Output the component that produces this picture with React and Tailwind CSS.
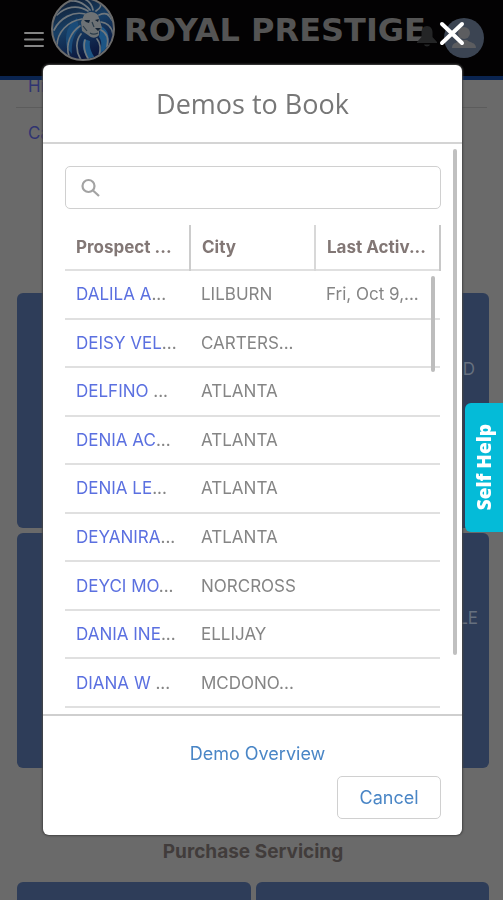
import React, { useState } from "react";

const prospects = [
  { name: "DALILA A", city: "LILBURN", date: "Fri, Oct 9,..." },
  { name: "DEISY VEL", city: "CARTERS..." },
  { name: "DELFINO ", city: "ATLANTA" },
  { name: "DENIA AC", city: "ATLANTA" },
  { name: "DENIA LE", city: "ATLANTA" },
  { name: "DEYANIRA", city: "ATLANTA" },
  { name: "DEYCI MO", city: "NORCROSS" },
  { name: "DANIA INE", city: "ELLIJAY" },
  { name: "DIANA W ", city: "MCDONO..." },
];

const LionLogo = () => (
  <svg viewBox="0 0 66 66" className="h-[66px] w-[66px] shrink-0" aria-hidden="true">
    <defs>
      <linearGradient id="mane" x1="0.2" y1="0" x2="0.6" y2="1">
        <stop offset="0" stopColor="#101c30" />
        <stop offset="0.45" stopColor="#173f66" />
        <stop offset="1" stopColor="#0a1238" />
      </linearGradient>
      <clipPath id="disc">
        <circle cx="33" cy="33" r="30" />
      </clipPath>
    </defs>
    <circle cx="33" cy="33" r="31" fill="url(#mane)" stroke="#6b6b6b" strokeWidth="2" />
    <g clipPath="url(#disc)">
      <path d="M27 22 C18 28 14 38 17 52 L22 58 C21 47 24 38 29 33 Z" fill="#1a4b78" />
      <path d="M51 30 C59 34 61 43 56 54 L49 58 C52 51 52 45 49 41 Z" fill="#1c5585" />
      <path d="M34 43 C31 50 34 57 38 63 L45 62 C41 56 39 51 40 45 Z" fill="#1c5585" />
      <g fill="none" stroke="#6f777d" strokeWidth="1.700" strokeLinecap="round">
        <path d="M38 15 C27 8 15 11 7 19" />
        <path d="M35 18 C23 15 10 22 4 34" />
        <path d="M32 23 C18 25 7 36 7 50" />
        <path d="M30 30 C21 36 15 48 19 60" />
        <path d="M31 38 C26 44 25 54 31 64" />
        <path d="M35 44 C33 51 35 58 39 64" />
        <path d="M40 14 C33 6 24 3 18 6" />
        <path d="M43 14 C42 8 38 4 32 2" />
        <path d="M46 15 C51 12 52 9 49 5" />
        <path d="M49 19 C56 16 59 18 62 24" />
        <path d="M51 26 C59 27 62 33 63 38" />
        <path d="M51 34 C57 37 59 43 57 51" />
        <path d="M47 43 C51 48 51 53 49 60" />
      </g>
      <path d="M34 19 C38 15 44 15 48 19 L50 25 L52 32 L49 35 L49 39 C46 43 41 42 38 39 L32 35 L31 26 Z" fill="#6d7275" />
      <path d="M34 24 L40 24 L39 27 L36 26 Z M45 24 L49 23 L48 26 Z M45 32 L51 32 L48 35 Z" fill="#142334" />
      <path d="M40 37 C43 39 46 38 48 37 M42 26 L44 31 M33 30 L37 35" fill="none" stroke="#2b3c4a" strokeWidth="1.200" />
    </g>
  </svg>
);

const Header = () => (
  <header className="relative flex h-20 border-b-4 border-[#0a2450] bg-[#030203] pl-6">
    <button type="button" aria-label="Menu" className="mt-7 mr-1.5 h-6 w-5 self-start">
      <svg viewBox="0 0 20 24" className="h-6 w-5" stroke="#858585" strokeWidth="2" strokeLinecap="round">
        <path d="M1 5H19M1 11.5H19M1 18H19" />
      </svg>
    </button>
    <div className="-mt-1">
      <LionLogo />
    </div>
    <p className="mt-2.5 ml-2 font-['DejaVu_Sans',sans-serif] text-[32px] leading-10 font-bold whitespace-nowrap text-[#545454]">
      ROYAL PRESTIGE
    </p>
    <div className="absolute top-4 right-[18px] flex gap-1">
      <svg viewBox="0 0 24 24" className="mt-2 h-6 w-6" fill="#242526">
        <path d="M12 2C8.500 2 6.500 5 6.500 8v5L2 18v1h20v-1l-4.500-5V8C17.500 5 15.500 2 12 2zM9 20.500h6c-.5 2.500-5.500 2.500-6 0z" />
      </svg>
      <svg viewBox="0 0 42 42" className="h-[42px] w-[42px]">
        <circle cx="21" cy="22" r="20" fill="#3b4452" />
        <circle cx="21" cy="17" r="6" fill="#5c5d60" />
        <path d="M9 32C9 26 15 27 18 24h6c3 3 9 2 9 8z" fill="#5c5d60" />
      </svg>
    </div>
  </header>
);

// the page below the dialog, already in its dimmed colors
const Page = () => (
  <div className="h-screen overflow-hidden bg-[#6a6a6a] font-['Inter',sans-serif] text-[17px]">
    <Header />
    <nav className="mx-4 h-[213px] text-[#303471]">
      <a href="#history" className="block h-7 border-b border-[#5c5c5c] pl-3 leading-3">
        History
      </a>
      <a href="#calendar" className="block pl-3 leading-[50px]">Calendar</a>
    </nav>
    <main className="pr-[14px] pl-[17px]">
      <div className="grid gap-[5px]">
        <div className="flex h-[235px] justify-end rounded-md bg-[#2e3d59] px-[14px] pt-16 text-[#66707f]">ADD LEAD</div>
        <div className="flex h-[235px] justify-end rounded-md bg-[#2e3d59] px-[11px] pt-[73px] text-[#66707f]">SCHEDULE</div>
      </div>
      <h2 className="mt-[66px] text-center text-[19px] leading-9 font-bold text-[#413c3b]">Purchase Servicing</h2>
      <div className="mt-3 grid grid-cols-2 gap-[5px]">
        <div className="h-20 rounded-md bg-[#2e3d59]" />
        <div className="h-20 rounded-md bg-[#2e3d59]" />
      </div>
    </main>
  </div>
);

const ProspectTable = () => (
  <div className="relative">
    <table className="h-[483px] w-full table-fixed text-left text-[17px] leading-6 text-[#858585]">
      <thead>
        <tr className="h-[45px] border-b-2 border-[#e0e0e0] text-[#827775]">
          <th className="border-r-2 border-[#cccccc] pl-[11px] font-bold whitespace-nowrap">Prospect ...</th>
          <th className="border-r-2 border-[#d8d8d8] pl-[11px] font-bold whitespace-nowrap">City</th>
          <th className="border-r-2 border-[#c8c8c8] pl-[11px] font-bold whitespace-nowrap">Last Activ...</th>
        </tr>
      </thead>
      <tbody>
        {prospects.map((p) => (
          <tr key={p.name} className="border-b-2 border-[#e0e0e0]">
            <td className="pl-[11px] whitespace-nowrap">
              <a href="#prospect" className="text-[#5b70e0]">{p.name}</a>...
            </td>
            <td className="pl-[11px] whitespace-nowrap">{p.city}</td>
            <td className="pl-[11px] whitespace-nowrap">{p.date}</td>
          </tr>
        ))}
      </tbody>
    </table>
    <div className="absolute top-[51px] right-[6px] h-24 w-1 rounded-sm bg-[#bdbdbd]" />
  </div>
);

const DemosModal = ({ onClose }) => {
  const [search, setSearch] = useState("");
  return (
    <div className="fixed inset-0 pt-[65px] pr-[41px] pl-[43px] font-['Inter',sans-serif]">
      <button type="button" aria-label="Close" onClick={onClose} className="absolute top-5 right-[37px] h-7 w-7">
        <svg viewBox="0 0 28 28" className="h-7 w-7" stroke="#ffffff" strokeWidth="4" strokeLinecap="round">
          <path d="M4 4L24 23M24 4L4 23" />
        </svg>
      </button>
      <section role="dialog" aria-labelledby="title" className="rounded-md bg-white shadow-[0_0_2px_1px_#444]">
        <h1 id="title" className="border-b-2 border-[#d4d4d4] text-center font-['Open_Sans',sans-serif] text-[27px] leading-[77px] text-[#777777]">
          Demos to Book
        </h1>
        <div className="relative h-[570px] overflow-hidden pt-[22px] pr-[21px] pl-[22px]">
          <label className="relative block">
            <svg viewBox="0 0 20 20" className="absolute top-3 left-4 h-5 w-5" fill="none" stroke="#a3a3a3" strokeWidth="2.200">
              <circle cx="7.500" cy="8" r="6" />
              <path d="M12 12.500L18 18" />
            </svg>
            <input
              type="text"
              aria-label="Search"
              value={search}
              onChange={(e) => setSearch(e.target.value)}
              className="block h-[43px] w-full rounded-[5px] border border-[#d0d0d0] pl-10 outline-none"
            />
          </label>
          <div className="mt-4">
            <ProspectTable />
          </div>
          <div className="absolute top-[5px] right-[5px] h-[506px] w-1 rounded-sm bg-[#c0c0c0]" />
        </div>
        <footer className="flex flex-col items-end border-t-2 border-[#cfcfcf] pt-[26px] pr-[21px] pb-4 pl-[31px] text-[#4a86c6]">
          <a href="#overview" className="self-center text-lg leading-6">Demo Overview</a>
          <button type="button" onClick={onClose} className="mt-[10px] h-[43px] w-[104px] rounded-[5px] border border-[#d0d0d0] text-lg">
            Cancel
          </button>
        </footer>
      </section>
    </div>
  );
};

const App = () => {
  const [open, setOpen] = useState(true);
  return (
    <div className="relative">
      <Page />
      {open && <DemosModal onClose={() => setOpen(false)} />}
      <button
        type="button"
        className="fixed top-[403px] right-0 flex h-[129px] w-[38px] items-center justify-center rounded-l-md bg-[#04bbd8] font-['Open_Sans',sans-serif] text-[19px] font-extrabold text-white"
      >
        <span className="rotate-180 [writing-mode:vertical-rl]">Self Help</span>
      </button>
    </div>
  );
};

export default App;
